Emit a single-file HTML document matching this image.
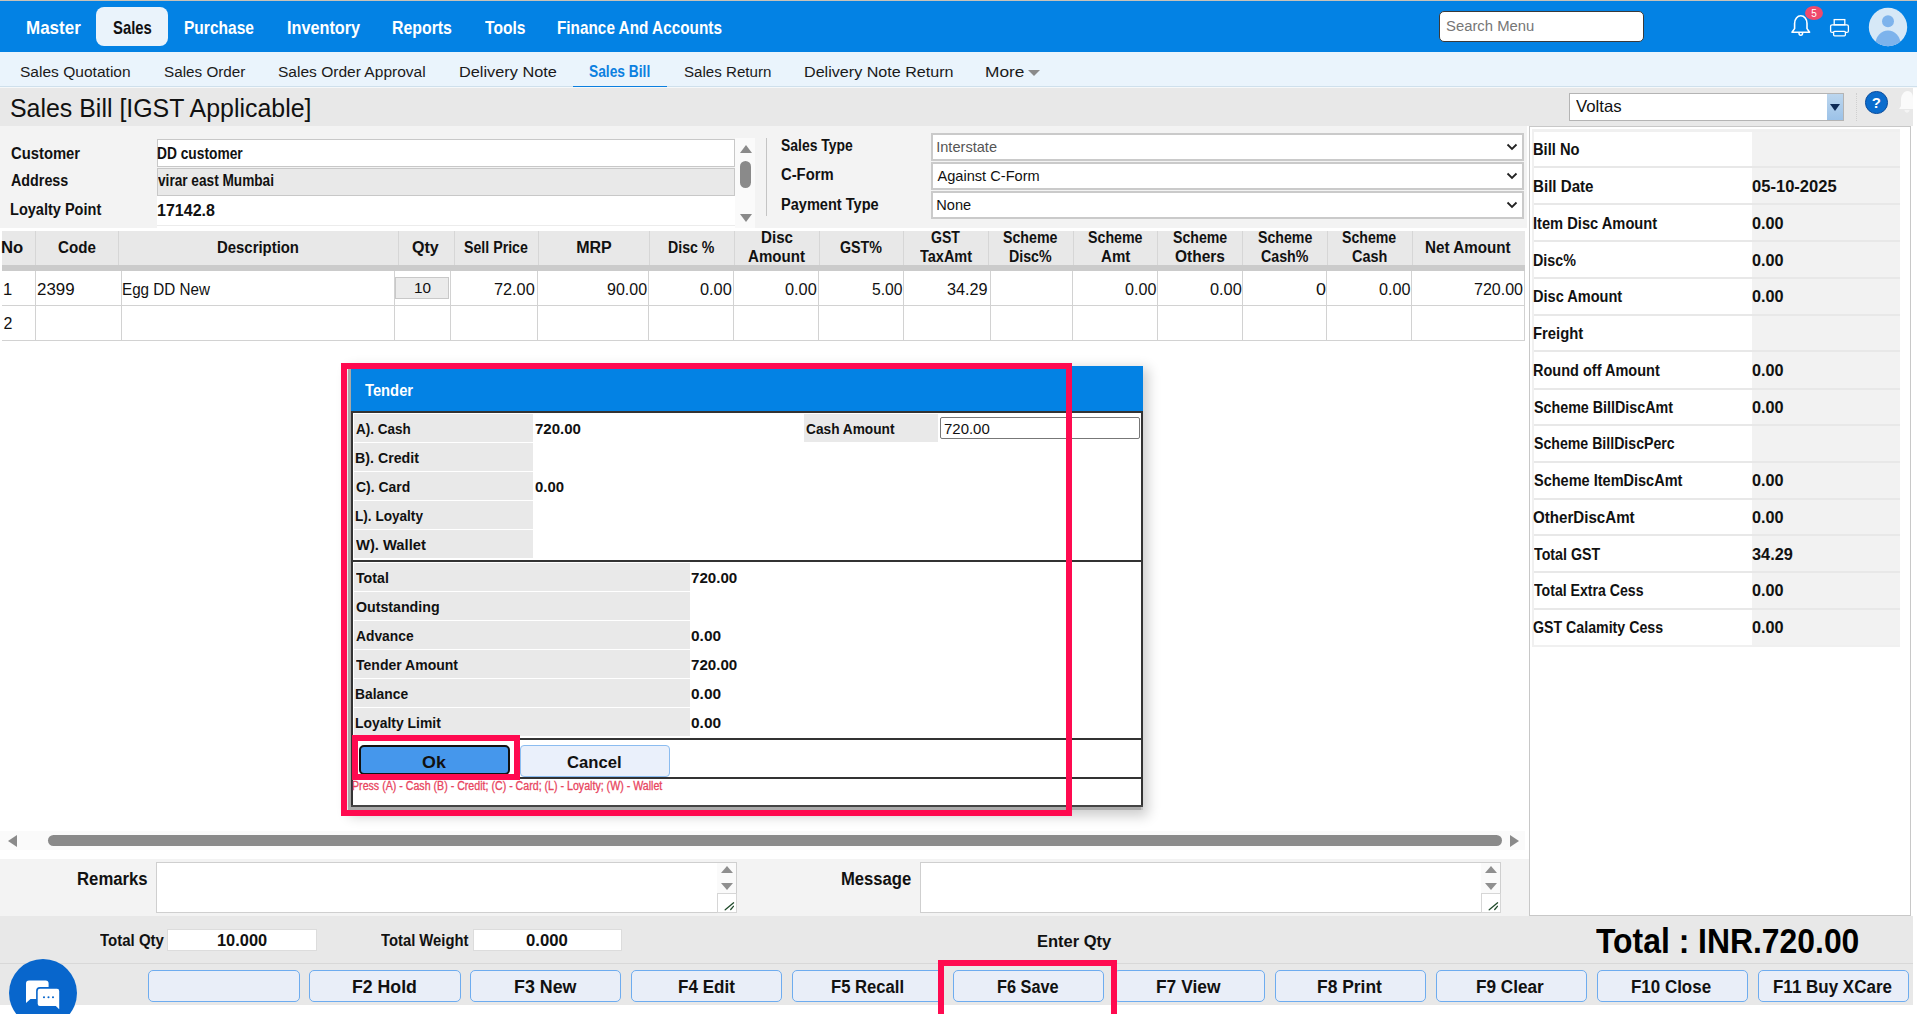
<!DOCTYPE html>
<html><head><meta charset="utf-8"><style>
html,body{margin:0;padding:0;width:1917px;height:1014px;overflow:hidden;background:#fff;font-family:"Liberation Sans", sans-serif;}
.t{position:absolute;white-space:nowrap;transform-origin:0 0;}
.r{position:absolute;}
</style></head><body>
<div class="r" style="left:0px;top:0px;width:1917px;height:1px;background:#c9c2b8;"></div>
<div class="r" style="left:0px;top:1px;width:1917px;height:51px;background:#0382e4;"></div>
<div class="r" style="left:96px;top:7px;width:72px;height:39px;background:#eaf3fb;border-radius:8px;"></div>
<div class="t" style="left:25.50px;top:17.21px;font-size:18.5px;line-height:21.26px;color:#fff;transform:scaleX(0.9178);font-weight:bold;">Master</div>
<div class="t" style="left:112.55px;top:17.21px;font-size:18.5px;line-height:21.26px;color:#111;transform:scaleX(0.8023);font-weight:bold;">Sales</div>
<div class="t" style="left:184.29px;top:17.21px;font-size:18.5px;line-height:21.26px;color:#fff;transform:scaleX(0.8403);font-weight:bold;">Purchase</div>
<div class="t" style="left:286.64px;top:17.21px;font-size:18.5px;line-height:21.26px;color:#fff;transform:scaleX(0.8785);font-weight:bold;">Inventory</div>
<div class="t" style="left:392.47px;top:17.21px;font-size:18.5px;line-height:21.26px;color:#fff;transform:scaleX(0.8572);font-weight:bold;">Reports</div>
<div class="t" style="left:484.54px;top:17.21px;font-size:18.5px;line-height:21.26px;color:#fff;transform:scaleX(0.8449);font-weight:bold;">Tools</div>
<div class="t" style="left:557.30px;top:17.21px;font-size:18.5px;line-height:21.26px;color:#fff;transform:scaleX(0.8284);font-weight:bold;">Finance And Accounts</div>
<div class="r" style="left:1439.4px;top:11px;width:205.0999999999999px;height:31px;background:#fff;border:1px solid #3a3a3a;box-sizing:border-box;border-radius:5px;"></div>
<div class="t" style="left:1445.73px;top:17.10px;font-size:15.5px;line-height:17.81px;color:#767676;transform:scaleX(0.9575);">Search Menu</div>
<svg class="r" style="left:1788px;top:13px" width="26" height="26" viewBox="0 0 26 26">
<path d="M4 19.2 L6.6 15.6 L6.6 10.4 C6.6 6 9.4 2.8 12.8 2.8 C16.2 2.8 19 6 19 10.4 L19 15.6 L21.6 19.2 Z" fill="none" stroke="#fff" stroke-width="1.6" stroke-linejoin="round"/>
<path d="M11 20 C11 23 14.6 23 14.6 20" fill="none" stroke="#fff" stroke-width="1.5"/></svg>
<div class="r" style="left:1805px;top:6px;width:18px;height:14px;border-radius:50%;background:#ef4a6c"></div>
<div class="t" style="left:1811.22px;top:8.14px;font-size:10px;line-height:11.49px;color:#fff;transform:scaleX(1.0000);">5</div>
<svg class="r" style="left:1829px;top:18px" width="22" height="20" viewBox="0 0 22 20">
<rect x="5.2" y="1.6" width="10.6" height="5.2" fill="none" stroke="#fff" stroke-width="1.3"/>
<rect x="1.6" y="6.8" width="17.8" height="7.6" rx="1.5" fill="none" stroke="#fff" stroke-width="1.3"/>
<rect x="4.6" y="13.4" width="11.8" height="4.4" rx="1" fill="#0382e4" stroke="#fff" stroke-width="1.3"/></svg>
<svg class="r" style="left:1868px;top:7px" width="40" height="40" viewBox="0 0 40 40">
<defs><clipPath id="av"><circle cx="20" cy="20" r="19.2"/></clipPath></defs>
<circle cx="20" cy="20" r="19.2" fill="#d6e8f7"/>
<circle cx="20" cy="14.2" r="6" fill="#7db3ec"/>
<ellipse cx="20" cy="37" rx="12.5" ry="13.5" fill="#7db3ec" clip-path="url(#av)"/></svg>
<div class="r" style="left:0px;top:52px;width:1917px;height:35px;background:#eaf4fc;"></div>
<div class="r" style="left:0px;top:86px;width:1917px;height:1px;background:#cfe0ec;"></div>
<div class="t" style="left:20.10px;top:63.10px;font-size:15.5px;line-height:17.81px;color:#1a1a1a;transform:scaleX(1.0030);">Sales Quotation</div>
<div class="t" style="left:163.51px;top:63.10px;font-size:15.5px;line-height:17.81px;color:#1a1a1a;transform:scaleX(0.9846);">Sales Order</div>
<div class="t" style="left:278.30px;top:63.10px;font-size:15.5px;line-height:17.81px;color:#1a1a1a;transform:scaleX(1.0026);">Sales Order Approval</div>
<div class="t" style="left:458.70px;top:63.10px;font-size:15.5px;line-height:17.81px;color:#1a1a1a;transform:scaleX(1.0520);">Delivery Note</div>
<div class="t" style="left:684.12px;top:63.10px;font-size:15.5px;line-height:17.81px;color:#1a1a1a;transform:scaleX(0.9751);">Sales Return</div>
<div class="t" style="left:803.51px;top:63.10px;font-size:15.5px;line-height:17.81px;color:#1a1a1a;transform:scaleX(1.0396);">Delivery Note Return</div>
<div class="t" style="left:985.22px;top:63.10px;font-size:15.5px;line-height:17.81px;color:#1a1a1a;transform:scaleX(1.1163);">More</div>
<div class="t" style="left:589.39px;top:62.86px;font-size:16px;line-height:18.38px;color:#0b80e0;transform:scaleX(0.8606);font-weight:bold;">Sales Bill</div>
<div class="r" style="left:573px;top:86px;width:94px;height:2px;background:#0b7fdf;"></div>
<div class="r" style="left:1028px;top:70px;width:0;height:0;border-left:6.5px solid transparent;border-right:6.5px solid transparent;border-top:6px solid #8a8a8a"></div>
<div class="r" style="left:0px;top:87px;width:1917px;height:1px;background:#f6f8f9;"></div>
<div class="r" style="left:0px;top:88px;width:1913px;height:38px;background:#e8e8e8;"></div>
<div class="t" style="left:10.38px;top:93.75px;font-size:26px;line-height:29.87px;color:#111;transform:scaleX(0.9583);">Sales Bill [IGST Applicable]</div>
<div class="r" style="left:1569px;top:93px;width:275px;height:28px;background:#fff;border:1px solid #b4b4b4;box-sizing:border-box;"></div>
<div class="t" style="left:1575.62px;top:97.13px;font-size:16.5px;line-height:18.96px;color:#111;transform:scaleX(1.0157);">Voltas</div>
<div class="r" style="left:1827px;top:94px;width:16px;height:26px;background:linear-gradient(#bcd6ee,#9cc2e8);"></div>
<div class="r" style="left:1830px;top:104px;width:0;height:0;border-left:5.0px solid transparent;border-right:5.0px solid transparent;border-top:7px solid #0d2a55"></div>
<div class="r" style="left:1856px;top:93px;width:0;height:28px;border-left:1px dotted #cfcfcf"></div>
<div class="r" style="left:1865px;top:91px;width:22.5px;height:22.5px;box-sizing:border-box;border-radius:50%;background:#0a6ccd;border:1.2px solid #0a4c9c"></div>
<div class="t" style="left:1871.70px;top:94.34px;font-size:15px;line-height:17.23px;color:#fff;transform:scaleX(1.0000);font-weight:bold;">?</div>
<svg class="r" style="left:1897px;top:90px" width="16" height="24" viewBox="0 0 16 24"><path d="M2 19 L4 16 L4 10 C4 5 7 1 10.5 1 C14 1 16 4 16 8 L16 19 Z" fill="#fafafa"/><path d="M7.5 20 C8 23.5 12 23.5 12.5 20 Z" fill="#f4f4f4"/></svg>
<div class="r" style="left:0px;top:126px;width:1527px;height:102px;background:#f3f3f3;"></div>
<div class="t" style="left:10.71px;top:144.86px;font-size:16px;line-height:18.38px;color:#111;transform:scaleX(0.9250);font-weight:bold;">Customer</div>
<div class="t" style="left:10.94px;top:171.86px;font-size:16px;line-height:18.38px;color:#111;transform:scaleX(0.8942);font-weight:bold;">Address</div>
<div class="t" style="left:10.36px;top:200.86px;font-size:16px;line-height:18.38px;color:#111;transform:scaleX(0.9083);font-weight:bold;">Loyalty Point</div>
<div class="r" style="left:157px;top:139px;width:578px;height:28px;background:#fff;border:1px solid #c8c8c8;box-sizing:border-box;"></div>
<div class="r" style="left:157px;top:168px;width:578px;height:28px;background:#e9e9e9;border:1px solid #c8c8c8;box-sizing:border-box;"></div>
<div class="r" style="left:157px;top:196px;width:578px;height:32px;background:#fff;"></div>
<div class="r" style="left:157px;top:225px;width:578px;height:1px;background:#ececec;"></div>
<div class="t" style="left:157.11px;top:144.86px;font-size:16px;line-height:18.38px;color:#111;transform:scaleX(0.8605);font-weight:bold;">DD customer</div>
<div class="t" style="left:157.93px;top:171.86px;font-size:16px;line-height:18.38px;color:#111;transform:scaleX(0.8526);font-weight:bold;">virar east Mumbai</div>
<div class="t" style="left:157.04px;top:201.86px;font-size:16px;line-height:18.38px;color:#111;transform:scaleX(1.0000);font-weight:bold;">17142.8</div>
<div class="r" style="left:735px;top:138px;width:20px;height:90px;background:#fafafa;"></div>
<div class="r" style="left:739.5px;top:144.5px;width:0;height:0;border-left:6.0px solid transparent;border-right:6.0px solid transparent;border-bottom:8px solid #8a8a8a"></div>
<div class="r" style="left:739.5px;top:214px;width:0;height:0;border-left:6.0px solid transparent;border-right:6.0px solid transparent;border-top:8px solid #8a8a8a"></div>
<div class="r" style="left:740px;top:161px;width:11px;height:27px;background:#8a8a8a;border-radius:5.5px;"></div>
<div class="r" style="left:766px;top:138px;width:1px;height:78px;background:#c4c4c4;"></div>
<div class="t" style="left:781.38px;top:136.86px;font-size:16px;line-height:18.38px;color:#111;transform:scaleX(0.8702);font-weight:bold;">Sales Type</div>
<div class="t" style="left:781.21px;top:165.86px;font-size:16px;line-height:18.38px;color:#111;transform:scaleX(0.9244);font-weight:bold;">C-Form</div>
<div class="t" style="left:780.85px;top:195.86px;font-size:16px;line-height:18.38px;color:#111;transform:scaleX(0.9103);font-weight:bold;">Payment Type</div>
<div class="r" style="left:931px;top:133px;width:593px;height:27.5px;background:#fff;border:2px solid #cacaca;box-sizing:border-box;"></div>
<div class="t" style="left:936.19px;top:139.00px;font-size:14.6px;line-height:16.78px;color:#555;transform:scaleX(1.0000);">Interstate</div>
<svg class="r" style="left:1506px;top:142.8px" width="12" height="8" viewBox="0 0 12 8"><path d="M1.5 1.5 L6 6 L10.5 1.5" fill="none" stroke="#222" stroke-width="1.8"/></svg>
<div class="r" style="left:931px;top:162px;width:593px;height:27.5px;background:#fff;border:2px solid #cacaca;box-sizing:border-box;"></div>
<div class="t" style="left:937.50px;top:168.00px;font-size:14.6px;line-height:16.78px;color:#111;transform:scaleX(1.0000);">Against C-Form</div>
<svg class="r" style="left:1506px;top:171.8px" width="12" height="8" viewBox="0 0 12 8"><path d="M1.5 1.5 L6 6 L10.5 1.5" fill="none" stroke="#222" stroke-width="1.8"/></svg>
<div class="r" style="left:931px;top:191px;width:593px;height:28px;background:#fff;border:2px solid #cacaca;box-sizing:border-box;"></div>
<div class="t" style="left:936.33px;top:197.00px;font-size:14.6px;line-height:16.78px;color:#111;transform:scaleX(1.0000);">None</div>
<svg class="r" style="left:1506px;top:201.0px" width="12" height="8" viewBox="0 0 12 8"><path d="M1.5 1.5 L6 6 L10.5 1.5" fill="none" stroke="#222" stroke-width="1.8"/></svg>
<div class="r" style="left:2px;top:231px;width:1523px;height:34px;background:#e8e8e8;"></div>
<div class="r" style="left:2px;top:265px;width:1523px;height:6px;background:#cbcbcb;"></div>
<div class="r" style="left:35px;top:231px;width:1px;height:34px;background:#d6d6d6;"></div>
<div class="r" style="left:118px;top:231px;width:1px;height:34px;background:#d6d6d6;"></div>
<div class="r" style="left:398px;top:231px;width:1px;height:34px;background:#d6d6d6;"></div>
<div class="r" style="left:454px;top:231px;width:1px;height:34px;background:#d6d6d6;"></div>
<div class="r" style="left:538px;top:231px;width:1px;height:34px;background:#d6d6d6;"></div>
<div class="r" style="left:649px;top:231px;width:1px;height:34px;background:#d6d6d6;"></div>
<div class="r" style="left:734px;top:231px;width:1px;height:34px;background:#d6d6d6;"></div>
<div class="r" style="left:819px;top:231px;width:1px;height:34px;background:#d6d6d6;"></div>
<div class="r" style="left:903px;top:231px;width:1px;height:34px;background:#d6d6d6;"></div>
<div class="r" style="left:988px;top:231px;width:1px;height:34px;background:#d6d6d6;"></div>
<div class="r" style="left:1073px;top:231px;width:1px;height:34px;background:#d6d6d6;"></div>
<div class="r" style="left:1157px;top:231px;width:1px;height:34px;background:#d6d6d6;"></div>
<div class="r" style="left:1242px;top:231px;width:1px;height:34px;background:#d6d6d6;"></div>
<div class="r" style="left:1327px;top:231px;width:1px;height:34px;background:#d6d6d6;"></div>
<div class="r" style="left:1412px;top:231px;width:1px;height:34px;background:#d6d6d6;"></div>
<div class="t" style="left:0.92px;top:238.86px;font-size:16px;line-height:18.38px;color:#111;transform:scaleX(1.0408);font-weight:bold;">No</div>
<div class="t" style="left:57.69px;top:238.86px;font-size:16px;line-height:18.38px;color:#111;transform:scaleX(0.9459);font-weight:bold;">Code</div>
<div class="t" style="left:216.93px;top:238.86px;font-size:16px;line-height:18.38px;color:#111;transform:scaleX(0.9314);font-weight:bold;">Description</div>
<div class="t" style="left:411.56px;top:238.86px;font-size:16px;line-height:18.38px;color:#111;transform:scaleX(1.0031);font-weight:bold;">Qty</div>
<div class="t" style="left:464.07px;top:238.86px;font-size:16px;line-height:18.38px;color:#111;transform:scaleX(0.8864);font-weight:bold;">Sell Price</div>
<div class="t" style="left:576.16px;top:238.86px;font-size:16px;line-height:18.38px;color:#111;transform:scaleX(1.0000);font-weight:bold;">MRP</div>
<div class="t" style="left:668.48px;top:238.86px;font-size:16px;line-height:18.38px;color:#111;transform:scaleX(0.8836);font-weight:bold;">Disc %</div>
<div class="t" style="left:839.93px;top:238.86px;font-size:16px;line-height:18.38px;color:#111;transform:scaleX(0.8919);font-weight:bold;">GST%</div>
<div class="t" style="left:1425.21px;top:238.86px;font-size:16px;line-height:18.38px;color:#111;transform:scaleX(0.9505);font-weight:bold;">Net Amount</div>
<div class="t" style="left:760.52px;top:228.86px;font-size:16px;line-height:18.38px;color:#111;transform:scaleX(0.9460);font-weight:bold;">Disc</div>
<div class="t" style="left:748.12px;top:247.86px;font-size:16px;line-height:18.38px;color:#111;transform:scaleX(0.9425);font-weight:bold;">Amount</div>
<div class="t" style="left:931.04px;top:228.86px;font-size:16px;line-height:18.38px;color:#111;transform:scaleX(0.8791);font-weight:bold;">GST</div>
<div class="t" style="left:920.16px;top:247.86px;font-size:16px;line-height:18.38px;color:#111;transform:scaleX(0.9051);font-weight:bold;">TaxAmt</div>
<div class="t" style="left:1003.27px;top:228.86px;font-size:16px;line-height:18.38px;color:#111;transform:scaleX(0.8869);font-weight:bold;">Scheme</div>
<div class="t" style="left:1009.08px;top:247.86px;font-size:16px;line-height:18.38px;color:#111;transform:scaleX(0.8870);font-weight:bold;">Disc%</div>
<div class="t" style="left:1088.17px;top:228.86px;font-size:16px;line-height:18.38px;color:#111;transform:scaleX(0.8886);font-weight:bold;">Scheme</div>
<div class="t" style="left:1100.62px;top:247.86px;font-size:16px;line-height:18.38px;color:#111;transform:scaleX(0.9416);font-weight:bold;">Amt</div>
<div class="t" style="left:1172.98px;top:228.86px;font-size:16px;line-height:18.38px;color:#111;transform:scaleX(0.8836);font-weight:bold;">Scheme</div>
<div class="t" style="left:1175.08px;top:247.86px;font-size:16px;line-height:18.38px;color:#111;transform:scaleX(0.9674);font-weight:bold;">Others</div>
<div class="t" style="left:1257.88px;top:228.86px;font-size:16px;line-height:18.38px;color:#111;transform:scaleX(0.8853);font-weight:bold;">Scheme</div>
<div class="t" style="left:1261.33px;top:247.86px;font-size:16px;line-height:18.38px;color:#111;transform:scaleX(0.8888);font-weight:bold;">Cash%</div>
<div class="t" style="left:1342.48px;top:228.86px;font-size:16px;line-height:18.38px;color:#111;transform:scaleX(0.8836);font-weight:bold;">Scheme</div>
<div class="t" style="left:1352.02px;top:247.86px;font-size:16px;line-height:18.38px;color:#111;transform:scaleX(0.9035);font-weight:bold;">Cash</div>
<div class="r" style="left:2px;top:271px;width:1523px;height:70px;background:#fff;"></div>
<div class="r" style="left:2px;top:305px;width:1523px;height:1px;background:#d2d2d2;"></div>
<div class="r" style="left:2px;top:340px;width:1523px;height:1px;background:#d2d2d2;"></div>
<div class="r" style="left:35px;top:271px;width:1px;height:70px;background:#d2d2d2;"></div>
<div class="r" style="left:121px;top:271px;width:1px;height:70px;background:#d2d2d2;"></div>
<div class="r" style="left:394px;top:271px;width:1px;height:70px;background:#d2d2d2;"></div>
<div class="r" style="left:450px;top:271px;width:1px;height:70px;background:#d2d2d2;"></div>
<div class="r" style="left:537px;top:271px;width:1px;height:70px;background:#d2d2d2;"></div>
<div class="r" style="left:648px;top:271px;width:1px;height:70px;background:#d2d2d2;"></div>
<div class="r" style="left:733px;top:271px;width:1px;height:70px;background:#d2d2d2;"></div>
<div class="r" style="left:818px;top:271px;width:1px;height:70px;background:#d2d2d2;"></div>
<div class="r" style="left:903px;top:271px;width:1px;height:70px;background:#d2d2d2;"></div>
<div class="r" style="left:990px;top:271px;width:1px;height:70px;background:#d2d2d2;"></div>
<div class="r" style="left:1072px;top:271px;width:1px;height:70px;background:#d2d2d2;"></div>
<div class="r" style="left:1157px;top:271px;width:1px;height:70px;background:#d2d2d2;"></div>
<div class="r" style="left:1242px;top:271px;width:1px;height:70px;background:#d2d2d2;"></div>
<div class="r" style="left:1326px;top:271px;width:1px;height:70px;background:#d2d2d2;"></div>
<div class="r" style="left:1411px;top:271px;width:1px;height:70px;background:#d2d2d2;"></div>
<div class="r" style="left:1524px;top:271px;width:1px;height:70px;background:#d2d2d2;"></div>
<div class="t" style="left:3.46px;top:280.86px;font-size:16px;line-height:18.38px;color:#111;transform:scaleX(1.0345);">1</div>
<div class="t" style="left:3.40px;top:314.86px;font-size:16px;line-height:18.38px;color:#111;transform:scaleX(1.0000);">2</div>
<div class="t" style="left:37.15px;top:280.86px;font-size:16px;line-height:18.38px;color:#111;transform:scaleX(1.0563);">2399</div>
<div class="t" style="left:122.28px;top:280.86px;font-size:16px;line-height:18.38px;color:#111;transform:scaleX(0.9509);">Egg DD New</div>
<div class="r" style="left:395px;top:277px;width:54px;height:21.5px;background:#ebebeb;border:1px solid #c8c8c8;box-sizing:border-box;"></div>
<div class="t" style="left:414.05px;top:280.07px;font-size:14.5px;line-height:16.66px;color:#111;transform:scaleX(1.0552);">10</div>
<div class="t" style="left:494.19px;top:280.86px;font-size:16px;line-height:18.38px;color:#111;transform:scaleX(1.0171);">72.00</div>
<div class="t" style="left:606.98px;top:280.86px;font-size:16px;line-height:18.38px;color:#111;transform:scaleX(0.9995);">90.00</div>
<div class="t" style="left:700.45px;top:280.86px;font-size:16px;line-height:18.38px;color:#111;transform:scaleX(1.0194);">0.00</div>
<div class="t" style="left:785.45px;top:280.86px;font-size:16px;line-height:18.38px;color:#111;transform:scaleX(1.0194);">0.00</div>
<div class="t" style="left:871.57px;top:280.86px;font-size:16px;line-height:18.38px;color:#111;transform:scaleX(0.9793);">5.00</div>
<div class="t" style="left:947.35px;top:280.86px;font-size:16px;line-height:18.38px;color:#111;transform:scaleX(1.0145);">34.29</div>
<div class="t" style="left:1125.06px;top:280.86px;font-size:16px;line-height:18.38px;color:#111;transform:scaleX(1.0060);">0.00</div>
<div class="t" style="left:1209.55px;top:280.86px;font-size:16px;line-height:18.38px;color:#111;transform:scaleX(1.0194);">0.00</div>
<div class="t" style="left:1315.78px;top:280.86px;font-size:16px;line-height:18.38px;color:#111;transform:scaleX(1.1198);">0</div>
<div class="t" style="left:1378.95px;top:280.86px;font-size:16px;line-height:18.38px;color:#111;transform:scaleX(1.0094);">0.00</div>
<div class="t" style="left:1474.20px;top:280.86px;font-size:16px;line-height:18.38px;color:#111;transform:scaleX(1.0021);">720.00</div>
<div class="r" style="left:0px;top:831px;width:1525px;height:19px;background:#fafafa;"></div>
<div class="r" style="left:8px;top:835px;width:0;height:0;border-top:6.0px solid transparent;border-bottom:6.0px solid transparent;border-right:9px solid #8a8a8a"></div>
<div class="r" style="left:1510px;top:835px;width:0;height:0;border-top:6.0px solid transparent;border-bottom:6.0px solid transparent;border-left:9px solid #8a8a8a"></div>
<div class="r" style="left:48px;top:835px;width:1454px;height:11px;background:#8a8a8a;border-radius:6px;"></div>
<div class="r" style="left:0px;top:859px;width:1529px;height:57px;background:#f3f3f3;"></div>
<div class="t" style="left:77.31px;top:868.95px;font-size:18px;line-height:20.68px;color:#111;transform:scaleX(0.9291);font-weight:bold;">Remarks</div>
<div class="t" style="left:841.02px;top:868.95px;font-size:18px;line-height:20.68px;color:#111;transform:scaleX(0.9239);font-weight:bold;">Message</div>
<div class="r" style="left:156px;top:862px;width:581px;height:51px;background:#fff;border:1px solid #cfcfcf;box-sizing:border-box;"></div>
<div class="r" style="left:717px;top:863px;width:19px;height:30px;background:#fafafa;"></div>
<div class="r" style="left:721px;top:866px;width:0;height:0;border-left:6.0px solid transparent;border-right:6.0px solid transparent;border-bottom:7px solid #8f8f8f"></div>
<div class="r" style="left:721px;top:883px;width:0;height:0;border-left:6.0px solid transparent;border-right:6.0px solid transparent;border-top:7px solid #8f8f8f"></div>
<div class="r" style="left:717px;top:893px;width:20px;height:20px;background:#fff;border:1px solid #d6d6d6;box-sizing:border-box;"></div>
<svg class="r" style="left:721px;top:897px" width="14" height="14" viewBox="0 0 14 14"><path d="M4.2 12.8 L12.6 5.8 M9.7 12.5 L12.4 9.3" stroke="#1f4a2a" stroke-width="1.3" stroke-linecap="round"/></svg>
<div class="r" style="left:920px;top:862px;width:581px;height:51px;background:#fff;border:1px solid #cfcfcf;box-sizing:border-box;"></div>
<div class="r" style="left:1481px;top:863px;width:19px;height:30px;background:#fafafa;"></div>
<div class="r" style="left:1485px;top:866px;width:0;height:0;border-left:6.0px solid transparent;border-right:6.0px solid transparent;border-bottom:7px solid #8f8f8f"></div>
<div class="r" style="left:1485px;top:883px;width:0;height:0;border-left:6.0px solid transparent;border-right:6.0px solid transparent;border-top:7px solid #8f8f8f"></div>
<div class="r" style="left:1481px;top:893px;width:20px;height:20px;background:#fff;border:1px solid #d6d6d6;box-sizing:border-box;"></div>
<svg class="r" style="left:1485px;top:897px" width="14" height="14" viewBox="0 0 14 14"><path d="M4.2 12.8 L12.6 5.8 M9.7 12.5 L12.4 9.3" stroke="#1f4a2a" stroke-width="1.3" stroke-linecap="round"/></svg>
<div class="r" style="left:1529px;top:126px;width:382px;height:790px;background:#fff;border:1px solid #c8c8c8;box-sizing:border-box;"></div>
<div class="r" style="left:1532px;top:129px;width:368px;height:518px;background:#f0f0f0;"></div>
<div class="r" style="left:1534px;top:131.5px;width:218px;height:513.5px;background:#fff;"></div>
<div class="r" style="left:1752px;top:131.5px;width:148px;height:513.5px;background:#f2f2f2;"></div>
<div class="r" style="left:1534px;top:166px;width:366px;height:2px;background:#e8e8e8;"></div>
<div class="t" style="left:1533.04px;top:140.13px;font-size:16.5px;line-height:18.96px;color:#111;transform:scaleX(0.8913);font-weight:bold;">Bill No</div>
<div class="r" style="left:1534px;top:203px;width:366px;height:2px;background:#e8e8e8;"></div>
<div class="t" style="left:1533.02px;top:177.13px;font-size:16.5px;line-height:18.96px;color:#111;transform:scaleX(0.9169);font-weight:bold;">Bill Date</div>
<div class="t" style="left:1751.74px;top:177.13px;font-size:16.5px;line-height:18.96px;color:#111;transform:scaleX(1.0033);font-weight:bold;">05-10-2025</div>
<div class="r" style="left:1534px;top:240px;width:366px;height:2px;background:#e8e8e8;"></div>
<div class="t" style="left:1533.05px;top:214.13px;font-size:16.5px;line-height:18.96px;color:#111;transform:scaleX(0.8890);font-weight:bold;">Item Disc Amount</div>
<div class="t" style="left:1751.75px;top:214.13px;font-size:16.5px;line-height:18.96px;color:#111;transform:scaleX(0.9846);font-weight:bold;">0.00</div>
<div class="r" style="left:1534px;top:277px;width:366px;height:2px;background:#e8e8e8;"></div>
<div class="t" style="left:1533.07px;top:251.13px;font-size:16.5px;line-height:18.96px;color:#111;transform:scaleX(0.8664);font-weight:bold;">Disc%</div>
<div class="t" style="left:1751.75px;top:251.13px;font-size:16.5px;line-height:18.96px;color:#111;transform:scaleX(0.9846);font-weight:bold;">0.00</div>
<div class="r" style="left:1534px;top:314px;width:366px;height:2px;background:#e8e8e8;"></div>
<div class="t" style="left:1533.05px;top:287.13px;font-size:16.5px;line-height:18.96px;color:#111;transform:scaleX(0.8815);font-weight:bold;">Disc Amount</div>
<div class="t" style="left:1751.75px;top:287.13px;font-size:16.5px;line-height:18.96px;color:#111;transform:scaleX(0.9846);font-weight:bold;">0.00</div>
<div class="r" style="left:1534px;top:350px;width:366px;height:2px;background:#e8e8e8;"></div>
<div class="t" style="left:1533.04px;top:324.13px;font-size:16.5px;line-height:18.96px;color:#111;transform:scaleX(0.8972);font-weight:bold;">Freight</div>
<div class="r" style="left:1534px;top:388px;width:366px;height:2px;background:#e8e8e8;"></div>
<div class="t" style="left:1533.06px;top:361.13px;font-size:16.5px;line-height:18.96px;color:#111;transform:scaleX(0.8790);font-weight:bold;">Round off Amount</div>
<div class="t" style="left:1751.75px;top:361.13px;font-size:16.5px;line-height:18.96px;color:#111;transform:scaleX(0.9846);font-weight:bold;">0.00</div>
<div class="r" style="left:1534px;top:424px;width:366px;height:2px;background:#e8e8e8;"></div>
<div class="t" style="left:1533.57px;top:398.13px;font-size:16.5px;line-height:18.96px;color:#111;transform:scaleX(0.8661);font-weight:bold;">Scheme BillDiscAmt</div>
<div class="t" style="left:1751.75px;top:398.13px;font-size:16.5px;line-height:18.96px;color:#111;transform:scaleX(0.9846);font-weight:bold;">0.00</div>
<div class="r" style="left:1534px;top:461px;width:366px;height:2px;background:#e8e8e8;"></div>
<div class="t" style="left:1533.58px;top:434.13px;font-size:16.5px;line-height:18.96px;color:#111;transform:scaleX(0.8567);font-weight:bold;">Scheme BillDiscPerc</div>
<div class="r" style="left:1534px;top:498px;width:366px;height:2px;background:#e8e8e8;"></div>
<div class="t" style="left:1533.56px;top:471.13px;font-size:16.5px;line-height:18.96px;color:#111;transform:scaleX(0.8795);font-weight:bold;">Scheme ItemDiscAmt</div>
<div class="t" style="left:1751.75px;top:471.13px;font-size:16.5px;line-height:18.96px;color:#111;transform:scaleX(0.9846);font-weight:bold;">0.00</div>
<div class="r" style="left:1534px;top:534px;width:366px;height:2px;background:#e8e8e8;"></div>
<div class="t" style="left:1533.40px;top:508.13px;font-size:16.5px;line-height:18.96px;color:#111;transform:scaleX(0.9159);font-weight:bold;">OtherDiscAmt</div>
<div class="t" style="left:1751.75px;top:508.13px;font-size:16.5px;line-height:18.96px;color:#111;transform:scaleX(0.9846);font-weight:bold;">0.00</div>
<div class="r" style="left:1534px;top:571px;width:366px;height:2px;background:#e8e8e8;"></div>
<div class="t" style="left:1533.86px;top:545.13px;font-size:16.5px;line-height:18.96px;color:#111;transform:scaleX(0.8636);font-weight:bold;">Total GST</div>
<div class="t" style="left:1751.99px;top:545.13px;font-size:16.5px;line-height:18.96px;color:#111;transform:scaleX(0.9886);font-weight:bold;">34.29</div>
<div class="r" style="left:1534px;top:608px;width:366px;height:2px;background:#e8e8e8;"></div>
<div class="t" style="left:1533.86px;top:581.13px;font-size:16.5px;line-height:18.96px;color:#111;transform:scaleX(0.8552);font-weight:bold;">Total Extra Cess</div>
<div class="t" style="left:1751.75px;top:581.13px;font-size:16.5px;line-height:18.96px;color:#111;transform:scaleX(0.9846);font-weight:bold;">0.00</div>
<div class="t" style="left:1533.43px;top:618.13px;font-size:16.5px;line-height:18.96px;color:#111;transform:scaleX(0.8594);font-weight:bold;">GST Calamity Cess</div>
<div class="t" style="left:1751.75px;top:618.13px;font-size:16.5px;line-height:18.96px;color:#111;transform:scaleX(0.9846);font-weight:bold;">0.00</div>
<div class="r" style="left:0px;top:916px;width:1913px;height:47px;background:#e8e8e8;"></div>
<div class="r" style="left:0px;top:963px;width:1913px;height:1px;background:#d8d8d8;"></div>
<div class="t" style="left:99.75px;top:931.13px;font-size:16.5px;line-height:18.96px;color:#111;transform:scaleX(0.9094);font-weight:bold;">Total Qty</div>
<div class="r" style="left:167px;top:928.5px;width:150px;height:22.0px;background:#fff;border:1px solid #dcdcdc;box-sizing:border-box;"></div>
<div class="t" style="left:216.92px;top:931.13px;font-size:16.5px;line-height:18.96px;color:#111;transform:scaleX(0.9930);font-weight:bold;">10.000</div>
<div class="t" style="left:381.05px;top:931.13px;font-size:16.5px;line-height:18.96px;color:#111;transform:scaleX(0.8970);font-weight:bold;">Total Weight</div>
<div class="r" style="left:472.5px;top:928.5px;width:149.5px;height:22.0px;background:#fff;border:1px solid #dcdcdc;box-sizing:border-box;"></div>
<div class="t" style="left:525.83px;top:931.13px;font-size:16.5px;line-height:18.96px;color:#111;transform:scaleX(1.0118);font-weight:bold;">0.000</div>
<div class="t" style="left:1037.33px;top:932.13px;font-size:16.5px;line-height:18.96px;color:#111;transform:scaleX(1.0001);font-weight:bold;">Enter Qty</div>
<div class="t" style="left:1595.98px;top:921.12px;font-size:35px;line-height:40.22px;color:#000;transform:scaleX(0.9107);font-weight:bold;">Total : INR.720.00</div>
<div class="r" style="left:0px;top:964px;width:1913px;height:41px;background:#e8e8e8;"></div>
<div class="r" style="left:148.3px;top:970px;width:151.3px;height:31.5px;background:#e9eef8;border:1px solid #6eacef;box-sizing:border-box;border-radius:5px;"></div>
<div class="r" style="left:309.2px;top:970px;width:151.40000000000003px;height:31.5px;background:#e9eef8;border:1px solid #6eacef;box-sizing:border-box;border-radius:5px;"></div>
<div class="t" style="left:351.75px;top:976.95px;font-size:18px;line-height:20.68px;color:#111;transform:scaleX(0.9838);font-weight:bold;">F2 Hold</div>
<div class="r" style="left:470.2px;top:970px;width:151.3px;height:31.5px;background:#e9eef8;border:1px solid #6eacef;box-sizing:border-box;border-radius:5px;"></div>
<div class="t" style="left:513.54px;top:976.95px;font-size:18px;line-height:20.68px;color:#111;transform:scaleX(0.9916);font-weight:bold;">F3 New</div>
<div class="r" style="left:631.1px;top:970px;width:151.39999999999998px;height:31.5px;background:#e9eef8;border:1px solid #6eacef;box-sizing:border-box;border-radius:5px;"></div>
<div class="t" style="left:677.69px;top:976.95px;font-size:18px;line-height:20.68px;color:#111;transform:scaleX(0.9473);font-weight:bold;">F4 Edit</div>
<div class="r" style="left:792.1px;top:970px;width:151.29999999999995px;height:31.5px;background:#e9eef8;border:1px solid #6eacef;box-sizing:border-box;border-radius:5px;"></div>
<div class="t" style="left:830.72px;top:976.95px;font-size:18px;line-height:20.68px;color:#111;transform:scaleX(0.9246);font-weight:bold;">F5 Recall</div>
<div class="r" style="left:953.0px;top:970px;width:151.29999999999995px;height:31.5px;background:#e9eef8;border:1px solid #6eacef;box-sizing:border-box;border-radius:5px;"></div>
<div class="t" style="left:996.94px;top:976.95px;font-size:18px;line-height:20.68px;color:#111;transform:scaleX(0.9058);font-weight:bold;">F6 Save</div>
<div class="r" style="left:1114.0px;top:970px;width:151.29999999999995px;height:31.5px;background:#e9eef8;border:1px solid #6eacef;box-sizing:border-box;border-radius:5px;"></div>
<div class="t" style="left:1156.27px;top:976.95px;font-size:18px;line-height:20.68px;color:#111;transform:scaleX(0.9663);font-weight:bold;">F7 View</div>
<div class="r" style="left:1274.9px;top:970px;width:151.29999999999995px;height:31.5px;background:#e9eef8;border:1px solid #6eacef;box-sizing:border-box;border-radius:5px;"></div>
<div class="t" style="left:1316.87px;top:976.95px;font-size:18px;line-height:20.68px;color:#111;transform:scaleX(0.9678);font-weight:bold;">F8 Print</div>
<div class="r" style="left:1435.9px;top:970px;width:151.29999999999995px;height:31.5px;background:#e9eef8;border:1px solid #6eacef;box-sizing:border-box;border-radius:5px;"></div>
<div class="t" style="left:1476.48px;top:976.95px;font-size:18px;line-height:20.68px;color:#111;transform:scaleX(0.9544);font-weight:bold;">F9 Clear</div>
<div class="r" style="left:1596.8px;top:970px;width:151.29999999999995px;height:31.5px;background:#e9eef8;border:1px solid #6eacef;box-sizing:border-box;border-radius:5px;"></div>
<div class="t" style="left:1630.90px;top:976.95px;font-size:18px;line-height:20.68px;color:#111;transform:scaleX(0.9417);font-weight:bold;">F10 Close</div>
<div class="r" style="left:1757.8px;top:970px;width:151.29999999999995px;height:31.5px;background:#e9eef8;border:1px solid #6eacef;box-sizing:border-box;border-radius:5px;"></div>
<div class="t" style="left:1772.80px;top:976.95px;font-size:18px;line-height:20.68px;color:#111;transform:scaleX(0.9436);font-weight:bold;">F11 Buy XCare</div>
<div class="r" style="left:938px;top:960px;width:179px;height:60px;border:6.5px solid #ff0a50;box-sizing:border-box;"></div>
<svg class="r" style="left:9px;top:959px" width="68" height="55" viewBox="0 0 68 55">
<circle cx="34" cy="34" r="34" fill="#0866cc"/>
<path d="M17 24.6 Q17 21.6 20 21.6 H36.6 Q39.6 21.6 39.6 24.6 V40 H21.5 L17 44 Z" fill="#fff"/>
<path d="M27.9 31.9 Q27.9 28.9 30.9 28.9 H48 Q51 28.9 51 31.9 V52 L46.5 47.8 H30.9 Q27.9 47.8 27.9 44.8 Z" fill="#fff" stroke="#0866cc" stroke-width="1.6"/>
<circle cx="35" cy="38.3" r="1.05" fill="#0866cc"/><circle cx="39.5" cy="38.3" r="1.05" fill="#0866cc"/><circle cx="44" cy="38.3" r="1.05" fill="#0866cc"/></svg>
<div class="r" style="left:348px;top:366px;width:795px;height:444px;box-shadow:3px 4px 12px 2px rgba(0,0,0,0.2);background:#fff"></div>
<div class="r" style="left:348px;top:366px;width:3px;height:442px;background:#a8a8a8;"></div>
<div class="r" style="left:351px;top:366px;width:792px;height:45px;background:#0382e4;"></div>
<div class="t" style="left:364.95px;top:381.86px;font-size:16px;line-height:18.38px;color:#fff;transform:scaleX(0.9216);font-weight:bold;">Tender</div>
<div class="r" style="left:351px;top:411px;width:792px;height:2px;background:#333;"></div>
<div class="r" style="left:351px;top:411px;width:2px;height:396px;background:#333;"></div>
<div class="r" style="left:1141px;top:411px;width:2px;height:396px;background:#333;"></div>
<div class="r" style="left:351px;top:805px;width:792px;height:2px;background:#444;"></div>
<div class="r" style="left:348px;top:807px;width:793px;height:3px;background:#ababab;"></div>
<div class="r" style="left:1141px;top:807px;width:2px;height:3px;background:#c8c8c8;"></div>
<div class="r" style="left:354px;top:414px;width:179px;height:27.5px;background:#e9e9e9;"></div>
<div class="t" style="left:355.86px;top:420.10px;font-size:15.5px;line-height:17.81px;color:#111;transform:scaleX(0.8694);font-weight:bold;">A). Cash</div>
<div class="t" style="left:534.60px;top:420.10px;font-size:15.5px;line-height:17.81px;color:#111;transform:scaleX(0.9699);font-weight:bold;">720.00</div>
<div class="r" style="left:354px;top:443px;width:179px;height:27.5px;background:#e9e9e9;"></div>
<div class="t" style="left:355.28px;top:449.10px;font-size:15.5px;line-height:17.81px;color:#111;transform:scaleX(0.9167);font-weight:bold;">B). Credit</div>
<div class="r" style="left:354px;top:472px;width:179px;height:27.5px;background:#e9e9e9;"></div>
<div class="t" style="left:355.64px;top:478.10px;font-size:15.5px;line-height:17.81px;color:#111;transform:scaleX(0.8983);font-weight:bold;">C). Card</div>
<div class="t" style="left:534.60px;top:478.10px;font-size:15.5px;line-height:17.81px;color:#111;transform:scaleX(0.9617);font-weight:bold;">0.00</div>
<div class="r" style="left:354px;top:501px;width:179px;height:27.5px;background:#e9e9e9;"></div>
<div class="t" style="left:355.32px;top:507.10px;font-size:15.5px;line-height:17.81px;color:#111;transform:scaleX(0.8768);font-weight:bold;">L). Loyalty</div>
<div class="r" style="left:354px;top:530px;width:179px;height:27.5px;background:#e9e9e9;"></div>
<div class="t" style="left:356.20px;top:536.10px;font-size:15.5px;line-height:17.81px;color:#111;transform:scaleX(0.9503);font-weight:bold;">W). Wallet</div>
<div class="r" style="left:804px;top:414px;width:134px;height:28px;background:#e9e9e9;"></div>
<div class="t" style="left:806.25px;top:420.10px;font-size:15.5px;line-height:17.81px;color:#111;transform:scaleX(0.8837);font-weight:bold;">Cash Amount</div>
<div class="r" style="left:940px;top:417px;width:200px;height:22px;background:#fff;border:1px solid #777;box-sizing:border-box;border-radius:2px;"></div>
<div class="t" style="left:944.25px;top:420.33px;font-size:15px;line-height:17.23px;color:#111;transform:scaleX(0.9972);">720.00</div>
<div class="r" style="left:353px;top:560px;width:788px;height:2px;background:#333;"></div>
<div class="r" style="left:354px;top:563px;width:336px;height:27.5px;background:#e9e9e9;"></div>
<div class="t" style="left:356.16px;top:569.10px;font-size:15.5px;line-height:17.81px;color:#111;transform:scaleX(0.9151);font-weight:bold;">Total</div>
<div class="t" style="left:690.89px;top:569.10px;font-size:15.5px;line-height:17.81px;color:#111;transform:scaleX(0.9764);font-weight:bold;">720.00</div>
<div class="r" style="left:354px;top:592px;width:336px;height:27.5px;background:#e9e9e9;"></div>
<div class="t" style="left:355.73px;top:598.10px;font-size:15.5px;line-height:17.81px;color:#111;transform:scaleX(0.9156);font-weight:bold;">Outstanding</div>
<div class="r" style="left:354px;top:621px;width:336px;height:27.5px;background:#e9e9e9;"></div>
<div class="t" style="left:355.95px;top:627.10px;font-size:15.5px;line-height:17.81px;color:#111;transform:scaleX(0.8911);font-weight:bold;">Advance</div>
<div class="t" style="left:690.88px;top:627.10px;font-size:15.5px;line-height:17.81px;color:#111;transform:scaleX(0.9963);font-weight:bold;">0.00</div>
<div class="r" style="left:354px;top:650px;width:336px;height:27.5px;background:#e9e9e9;"></div>
<div class="t" style="left:356.16px;top:656.10px;font-size:15.5px;line-height:17.81px;color:#111;transform:scaleX(0.9044);font-weight:bold;">Tender Amount</div>
<div class="t" style="left:690.89px;top:656.10px;font-size:15.5px;line-height:17.81px;color:#111;transform:scaleX(0.9764);font-weight:bold;">720.00</div>
<div class="r" style="left:354px;top:679px;width:336px;height:27.5px;background:#e9e9e9;"></div>
<div class="t" style="left:355.40px;top:685.10px;font-size:15.5px;line-height:17.81px;color:#111;transform:scaleX(0.8930);font-weight:bold;">Balance</div>
<div class="t" style="left:690.88px;top:685.10px;font-size:15.5px;line-height:17.81px;color:#111;transform:scaleX(0.9963);font-weight:bold;">0.00</div>
<div class="r" style="left:354px;top:708px;width:336px;height:27.5px;background:#e9e9e9;"></div>
<div class="t" style="left:355.40px;top:714.10px;font-size:15.5px;line-height:17.81px;color:#111;transform:scaleX(0.8973);font-weight:bold;">Loyalty Limit</div>
<div class="t" style="left:690.88px;top:714.10px;font-size:15.5px;line-height:17.81px;color:#111;transform:scaleX(0.9963);font-weight:bold;">0.00</div>
<div class="r" style="left:353px;top:738px;width:788px;height:2px;background:#333;"></div>
<div class="r" style="left:358.6px;top:745.4px;width:151.39999999999998px;height:30.100000000000023px;background:#4597ec;border:2px solid #111;box-sizing:border-box;border-radius:5px;"></div>
<div class="t" style="left:421.59px;top:753.13px;font-size:16.5px;line-height:18.96px;color:#111;transform:scaleX(1.0811);font-weight:bold;">Ok</div>
<div class="r" style="left:520px;top:745.4px;width:150px;height:31.600000000000023px;background:#eaf0fb;border:1px solid #8bbcf0;box-sizing:border-box;border-radius:4px;"></div>
<div class="t" style="left:567.14px;top:753.13px;font-size:16.5px;line-height:18.96px;color:#111;transform:scaleX(1.0076);font-weight:bold;">Cancel</div>
<div class="r" style="left:353px;top:777px;width:788px;height:2px;background:#333;"></div>
<div class="t" style="left:352.15px;top:780.35px;font-size:12px;line-height:13.79px;color:#e8455e;transform:scaleX(0.8860);-webkit-text-stroke:0.3px #e8455e;">Press (A) - Cash (B) - Credit; (C) - Card; (L) - Loyalty; (W) - Wallet</div>
<div class="r" style="left:341px;top:363px;width:731px;height:452.5px;border:6px solid #ff0a50;box-sizing:border-box;"></div>
<div class="r" style="left:352px;top:735.3px;width:167.5px;height:44.700000000000045px;border:6px solid #ff0a50;box-sizing:border-box;"></div>
</body></html>
